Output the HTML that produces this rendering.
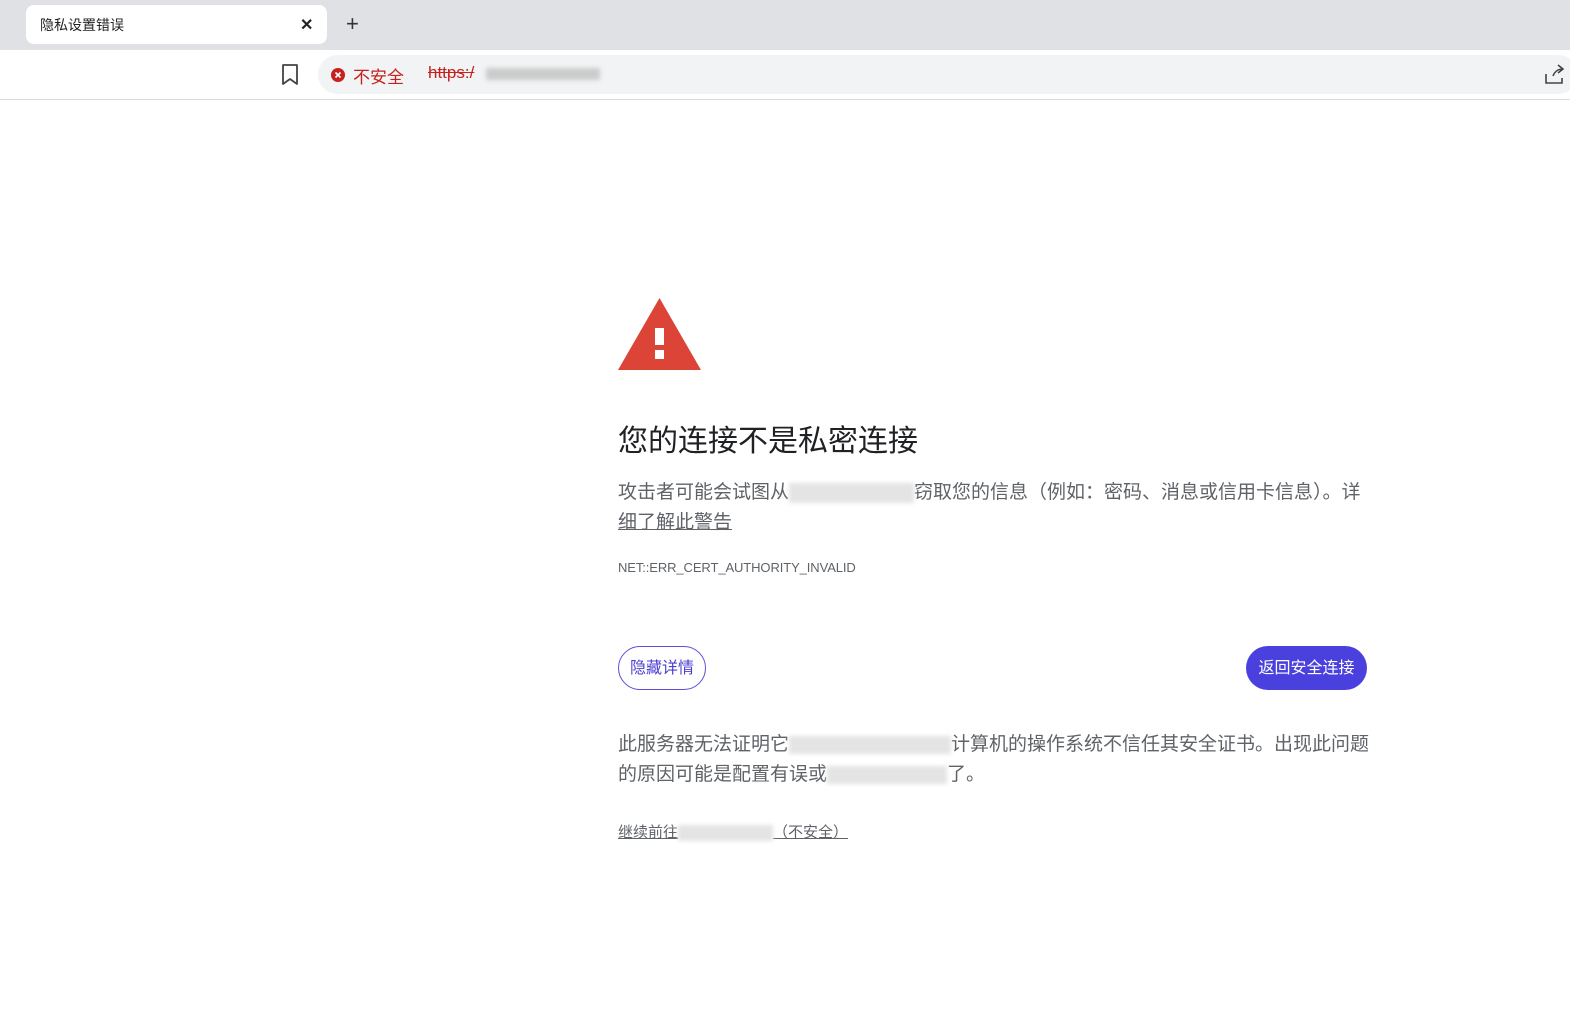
<!DOCTYPE html>
<html><head><meta charset="utf-8"><style>
body{margin:0;width:1570px;height:1029px;background:#fff;font-family:"Liberation Sans","Noto Sans CJK SC",sans-serif;position:relative;overflow:hidden}
.a{position:absolute;white-space:nowrap}
.blur{display:inline-block;background:#e4e4e4;filter:blur(2px);vertical-align:middle}
</style></head><body>
<div class="a" style="left:0;top:0;width:1570px;height:50px;background:#dfe1e5"></div>
<div class="a" style="left:26px;top:5px;width:301px;height:39px;background:#fff;border-radius:8px"></div>
<div class="a" style="left:40px;top:15px;font-size:14px;color:#222">隐私设置错误</div>
<div class="a" style="left:300px;top:15px;font-size:16px;color:#222;font-weight:bold">✕</div>
<div class="a" style="left:346px;top:11px;font-size:22px;color:#333">+</div>
<div class="a" style="left:0;top:99px;width:1570px;height:1px;background:#dadce0"></div>
<svg class="a" style="left:281px;top:64px" width="18" height="22" viewBox="0 0 18 22"><path d="M2 1h14v19l-7-5-7 5z" fill="none" stroke="#444" stroke-width="1.8" stroke-linejoin="round"/></svg>
<div class="a" style="left:318px;top:55px;width:1260px;height:39px;background:#f1f3f4;border-radius:20px"></div>
<svg class="a" style="left:331px;top:68px" width="14" height="14"><circle cx="7" cy="7" r="7" fill="#c5221f"/><path d="M4.5 4.5l5 5M9.5 4.5l-5 5" stroke="#fff" stroke-width="1.6"/></svg>
<div class="a" style="left:353px;top:63px;font-size:17px;color:#c5221f">不安全</div>
<div class="a" style="left:428px;top:63px;font-size:17px;color:#c5221f;text-decoration:line-through">https:/</div>
<div class="a blur" style="left:486px;top:68px;width:114px;height:12px;background:#ccc"></div>
<svg class="a" style="left:1543px;top:64px" width="22" height="22" viewBox="0 0 22 22"><path d="M3 10v9h16v-5M10 12c2-5 5-7 10-7M15 1l5 4-5 4" fill="none" stroke="#444" stroke-width="1.6"/></svg>

<svg class="a" style="left:618px;top:298px" width="83" height="72" viewBox="0 0 83 72"><path d="M41.5 0L83 72H0z" fill="#db4437"/><rect x="37" y="30" width="9" height="17" fill="#fff"/><rect x="37" y="52" width="9" height="9" fill="#fff"/></svg>
<div class="a" style="left:618px;top:416px;font-size:30px;color:#202124">您的连接不是私密连接</div>
<div class="a" style="left:618px;top:478px;font-size:19px;color:#5f6368;line-height:30px">攻击者可能会试图从<span class="blur" style="width:125px;height:20px"></span>窃取您的信息（例如：密码、消息或信用卡信息）。详<br><span style="text-decoration:underline">细了解此警告</span></div>
<div class="a" style="left:618px;top:560px;font-size:13px;color:#5f6368;letter-spacing:-0.1px">NET::ERR_CERT_AUTHORITY_INVALID</div>
<div class="a" style="left:618px;top:646px;width:88px;height:44px;border:1px solid #5a4fd6;border-radius:22px;box-sizing:border-box;color:#4a3fd0;font-size:16px;line-height:44px;text-align:center">隐藏详情</div>
<div class="a" style="left:1246px;top:646px;width:121px;height:44px;background:#4a40dd;border-radius:22px;color:#fff;font-size:16px;line-height:46px;text-align:center">返回安全连接</div>
<div class="a" style="left:618px;top:730px;font-size:19px;color:#5f6368;line-height:30px">此服务器无法证明它<span class="blur" style="width:162px;height:18px"></span>计算机的操作系统不信任其安全证书。出现此问题<br>的原因可能是配置有误或<span class="blur" style="width:120px;height:18px"></span>了。</div>
<div class="a" style="left:618px;top:821px;font-size:15px;color:#5f6368;text-decoration:underline">继续前往<span class="blur" style="width:95px;height:16px"></span>（不安全）</div>
</body></html>
